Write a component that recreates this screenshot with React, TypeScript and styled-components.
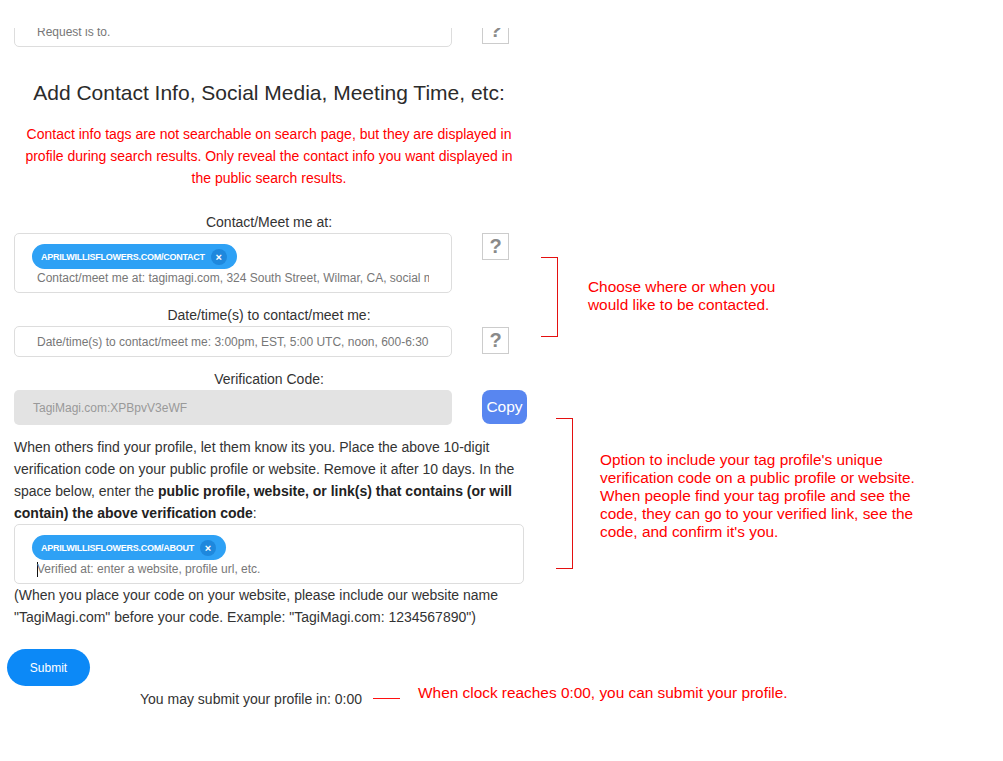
import React from "react";
import styled, { createGlobalStyle } from "styled-components";

const Global = createGlobalStyle`
  html, body { margin: 0; padding: 0; background: #fff; }
  body { font-family: "Liberation Sans", Arial, sans-serif; color: #333; }
  * { box-sizing: border-box; }
`;

const Page = styled.div`
  position: relative;
  width: 1003px;
  height: 761px;
  overflow: hidden;
  padding-top: 28px;
`;

const Clip = styled.div`
  overflow: hidden;
  height: 733px;
`;

const Form = styled.div`
  width: 524px;
  margin-top: -12px;
  padding-left: 14px;
  display: flex;
  flex-direction: column;
`;

const Row = styled.div`
  display: flex;
  align-items: flex-start;
  gap: 30px;
  & > * { flex-shrink: 0; }
`;

const Field = styled.div<{ $w?: number }>`
  width: ${(p) => p.$w ?? 438}px;
  border: 1px solid #ddd;
  border-radius: 5px;
  background: #fff;
  padding: 10px 22px 6px 17px;
  display: flex;
  flex-direction: column;
  align-items: flex-start;
`;

const SingleField = styled.div`
  width: 438px;
  height: 31px;
  border: 1px solid #ddd;
  border-radius: 5px;
  background: #fff;
  padding: 0 22px 0 22px;
  display: flex;
  align-items: center;
  overflow: hidden;
`;

const Placeholder = styled.div`
  font-size: 12px;
  line-height: 16px;
  color: #777;
  white-space: nowrap;
  overflow: hidden;
  width: 100%;
`;

const ChipLine = styled(Placeholder)`
  margin-top: 1px;
  padding-left: 5px;
  display: flex;
  align-items: center;
`;

const Caret = styled.span`
  display: inline-block;
  width: 1px;
  height: 15px;
  background: #111;
  margin-right: -1px;
`;

const Chip = styled.div`
  height: 25px;
  border-radius: 13px;
  background: #2ea1f5;
  display: inline-flex;
  align-items: center;
  padding: 0 10px 0 9px;
  gap: 6px;
`;

const ChipText = styled.span`
  color: #fff;
  font-weight: bold;
  font-size: 9px;
  letter-spacing: -0.25px;
  text-transform: uppercase;
  white-space: nowrap;
`;

const ChipClose = styled.span`
  width: 16px;
  height: 16px;
  border-radius: 50%;
  background: #1e88dd;
  color: #fff;
  font-size: 11px;
  font-weight: bold;
  line-height: 16px;
  text-align: center;
`;

const HelpBox = styled.div<{ $top?: number }>`
  width: 27px;
  height: 27px;
  border: 1px solid #ccc;
  background: #fff;
  color: #8a8a8a;
  font-weight: bold;
  font-size: 20px;
  line-height: 25px;
  text-align: center;
  margin-top: ${(p) => p.$top ?? 1}px;
`;

const Heading = styled.h2`
  margin: 34px 0 0;
  font-weight: normal;
  font-size: 21px;
  line-height: 24px;
  color: #2b2b2b;
  text-align: center;
`;

const Warning = styled.p`
  margin: 18px 0 0;
  font-size: 14px;
  line-height: 22px;
  color: #f00;
  text-align: center;
`;

const Label = styled.div<{ $top: number }>`
  margin-top: ${(p) => p.$top}px;
  margin-bottom: 1px;
  font-size: 14px;
  line-height: 20px;
  color: #333;
  text-align: center;
`;

const CodeBox = styled.div`
  width: 438px;
  height: 35px;
  border-radius: 5px;
  background: #e3e3e3;
  color: #999;
  font-size: 12px;
  padding-left: 19px;
  display: flex;
  align-items: center;
`;

const CopyButton = styled.button`
  width: 45px;
  height: 34px;
  border: none;
  border-radius: 8px;
  background: #5886f0;
  color: #fff;
  font-family: "Liberation Sans", Arial, sans-serif;
  font-size: 15.5px;
  padding: 0;
`;

const Body = styled.p<{ $top: number }>`
  margin: ${(p) => p.$top}px 0 0;
  font-size: 14px;
  line-height: 22px;
  color: #333;
  b { color: #222; }
`;

const SubmitButton = styled.button`
  margin: 21px 0 0 -7px;
  width: 83px;
  height: 37px;
  border: none;
  border-radius: 19px;
  background: #0c89f7;
  color: #fff;
  font-family: "Liberation Sans", Arial, sans-serif;
  font-size: 12px;
  align-self: flex-start;
`;

const TimerRow = styled.div`
  margin: 3px 0 0 126px;
  display: flex;
  align-items: flex-start;
  white-space: nowrap;
  & > * { flex-shrink: 0; }
`;

const TimerText = styled.span`
  font-size: 14px;
  line-height: 20px;
  color: #333;
`;

const Dash = styled.span`
  display: block;
  width: 27px;
  height: 0;
  border-top: 1px solid #ff1010;
  margin: 9px 18px 0 11px;
`;

const Note = styled.span`
  font-size: 15.4px;
  line-height: 18px;
  color: #f00;
  margin-top: -5px;
`;

const Bracket = styled.div<{ $top: number; $left: number; $h: number }>`
  position: absolute;
  top: ${(p) => p.$top}px;
  left: ${(p) => p.$left}px;
  width: 17px;
  height: ${(p) => p.$h}px;
  border: 1px solid #e41010;
  border-left: none;
`;

const Callout = styled.div<{ $top: number; $left: number }>`
  position: absolute;
  top: ${(p) => p.$top}px;
  left: ${(p) => p.$left}px;
  font-size: 15.4px;
  line-height: 18px;
  color: #f00;
  white-space: nowrap;
`;

export default function App() {
  return (
    <>
      <Global />
      <Page>
        <Clip>
          <Form>
            <Row>
              <SingleField>
                <Placeholder>Request is to.</Placeholder>
              </SingleField>
              <HelpBox>?</HelpBox>
            </Row>

            <Heading>Add Contact Info, Social Media, Meeting Time, etc:</Heading>
            <Warning>
              Contact info tags are not searchable on search page, but they are displayed in profile
              during search results. Only reveal the contact info you want displayed in the public
              search results.
            </Warning>

            <Label $top={23}>Contact/Meet me at:</Label>
            <Row>
              <Field>
                <Chip>
                  <ChipText>aprilwillisflowers.com/contact</ChipText>
                  <ChipClose>×</ChipClose>
                </Chip>
                <ChipLine>
                  Contact/meet me at: tagimagi.com, 324 South Street, Wilmar, CA, social media, etc.
                </ChipLine>
              </Field>
              <HelpBox $top={0}>?</HelpBox>
            </Row>

            <Label $top={12}>Date/time(s) to contact/meet me:</Label>
            <Row>
              <SingleField>
                <Placeholder>
                  Date/time(s) to contact/meet me: 3:00pm, EST, 5:00 UTC, noon, 600-6:30
                </Placeholder>
              </SingleField>
              <HelpBox>?</HelpBox>
            </Row>

            <Label $top={12}>Verification Code:</Label>
            <Row>
              <CodeBox>TagiMagi.com:XPBpvV3eWF</CodeBox>
              <CopyButton>Copy</CopyButton>
            </Row>

            <Body $top={11}>
              When others find your profile, let them know its you. Place the above 10-digit
              verification code on your public profile or website. Remove it after 10 days. In the
              space below, enter the{" "}
              <b>public profile, website, or link(s) that contains (or will contain) the above verification code</b>:
            </Body>

            <Field $w={510}>
              <Chip>
                <ChipText>aprilwillisflowers.com/about</ChipText>
                <ChipClose>×</ChipClose>
              </Chip>
              <ChipLine>
                <Caret />
                Verified at: enter a website, profile url, etc.
              </ChipLine>
            </Field>

            <Body $top={0}>
              (When you place your code on your website, please include our website name
              "TagiMagi.com" before your code. Example: "TagiMagi.com: 1234567890")
            </Body>

            <SubmitButton>Submit</SubmitButton>

            <TimerRow>
              <TimerText>You may submit your profile in: 0:00</TimerText>
              <Dash />
              <Note>When clock reaches 0:00, you can submit your profile.</Note>
            </TimerRow>
          </Form>
        </Clip>

        <Bracket $top={257} $left={541} $h={80} />
        <Callout $top={278} $left={588}>
          Choose where or when you
          <br />
          would like to be contacted.
        </Callout>

        <Bracket $top={418} $left={556} $h={151} />
        <Callout $top={451} $left={600}>
          Option to include your tag profile's unique
          <br />
          verification code on a public profile or website.
          <br />
          When people find your tag profile and see the
          <br />
          code, they can go to your verified link, see the
          <br />
          code, and confirm it's you.
        </Callout>
      </Page>
    </>
  );
}
